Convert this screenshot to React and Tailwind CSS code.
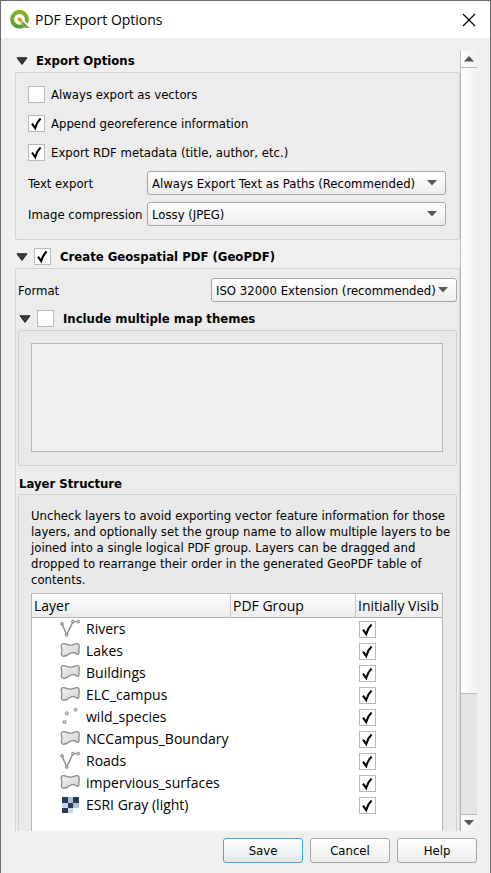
import { useState } from "react";

const layers = [
  { name: "Rivers", type: "line" },
  { name: "Lakes", type: "polygon" },
  { name: "Buildings", type: "polygon" },
  { name: "ELC_campus", type: "polygon" },
  { name: "wild_species", type: "point" },
  { name: "NCCampus_Boundary", type: "polygon" },
  { name: "Roads", type: "line" },
  { name: "impervious_surfaces", type: "polygon" },
  { name: "ESRI Gray (light)", type: "raster" },
];

function QgisLogo() {
  return (
    <svg width="20" height="20" viewBox="0 0 20 20" aria-hidden="true">
      <defs>
        <linearGradient id="ring" x1="0" y1="0" x2="0" y2="1">
          <stop offset="0" stopColor="#86b32a" />
          <stop offset="1" stopColor="#5b9a30" />
        </linearGradient>
      </defs>
      <circle cx="9.5" cy="9.3" r="7.4" fill="none" stroke="url(#ring)" strokeWidth="4" />
      <path d="M10 11.8V9.8h2.4l6.9 6.2v2.4h-2.8z" fill="#fff" stroke="#fff" strokeWidth="1.4" />
      <path d="M10.4 12.6l3-.8 6.1 6.2h-4.4z" fill="#73a53c" />
      <path d="M10.4 10.4h2.4l1.4 1.6-3.2 1.1z" fill="#e9d28b" />
      <path d="M7.8 7.8h3.2l1.4 3.2-2.2 1.4-2.4-2z" fill="#ee8a33" />
    </svg>
  );
}

function LayerIcon({ type }) {
  if (type === "line") {
    return (
      <svg width="20" height="20" viewBox="0 0 20 20" aria-hidden="true">
        <path d="M2 4.9L6.7 15.9L13 2.6H18" fill="none" stroke="#8c8c8c" strokeWidth="1.4" />
        <g fill="#d8d8d8" stroke="#858585">
          <circle cx="2" cy="4.9" r="1.4" />
          <circle cx="6.7" cy="15.9" r="1.4" />
          <circle cx="13" cy="2.6" r="1.4" />
          <circle cx="18.2" cy="2.6" r="1.4" />
        </g>
      </svg>
    );
  }
  if (type === "point") {
    return (
      <svg width="20" height="20" viewBox="0 0 20 20" aria-hidden="true">
        <g fill="#d8d8d8" stroke="#858585">
          <circle cx="4.5" cy="15" r="1.5" />
          <circle cx="6.8" cy="6.3" r="1.5" />
          <circle cx="15.6" cy="2.7" r="1.5" />
        </g>
      </svg>
    );
  }
  if (type === "raster") {
    return (
      <svg width="20" height="20" viewBox="0 -1 20 20" shapeRendering="crispEdges" aria-hidden="true">
        <path fill="#a9c2e2" d="M2 1h17v16H2z" />
        <path fill="#fff" d="M13 12h6v5h-6z" />
        <path fill="#c5d7ee" d="M2 7h6v5H2zM8 12h5v5H8z" />
        <path fill="#2c3b50" d="M2 1h6v6H2zM13 1h6v6h-6zM8 7h5v5H8zM2 12h6v5H2z" />
      </svg>
    );
  }
  return (
    <svg width="20" height="20" viewBox="0 -1 20 20" aria-hidden="true">
      <defs>
        <linearGradient id="area" x1="0" y1="0" x2="1" y2="1">
          <stop offset="0" stopColor="#f2f2f2" />
          <stop offset="1" stopColor="#cfcfcf" />
        </linearGradient>
      </defs>
      <path
        d="M1.2 3.6C1.5 1.4 3.5 1.3 5 1.8C8 3 11 3.9 14 2.4C16 1.5 19 1.1 19.2 3.6C19.4 6 18.6 8.5 18.9 10.5C19 12.4 18 12.6 16.4 11.8C13.5 9.8 11.8 10.2 9.5 11.8C7 13.6 4.5 14.8 2.6 14C.4 13 1.4 11 1.8 9.2C2.2 7 .9 5.4 1.2 3.6Z"
        fill="url(#area)"
        stroke="#8a8a8a"
        strokeWidth="1.3"
      />
    </svg>
  );
}

function Check({ id, label, initial = false }) {
  const [on, setOn] = useState(initial);
  return (
    <span className="grid size-[17px] shrink-0">
      <input
        id={id}
        type="checkbox"
        aria-label={label}
        checked={on}
        onChange={() => setOn(!on)}
        className="peer col-start-1 row-start-1 size-[17px] appearance-none border border-[#b9b9b9] bg-white"
      />
      <svg
        viewBox="0 0 17 17"
        className="pointer-events-none invisible col-start-1 row-start-1 size-[17px] peer-checked:visible"
        aria-hidden="true"
      >
        <path d="M4 8.6L7.2 13Q8.8 7.2 12.6 3.6" fill="none" stroke="#000" strokeWidth="2.1" />
      </svg>
    </span>
  );
}

function Triangle() {
  return (
    <svg width="12" height="8" viewBox="0 0 12 8" className="shrink-0" aria-hidden="true">
      <path d="M1 .8H11L6 7.4Z" fill="#3c3c3c" stroke="#1e1e1e" strokeLinejoin="round" />
    </svg>
  );
}

function Combo({ id, options, className }) {
  return (
    <span className={"grid " + className}>
      <select
        id={id}
        className="col-start-1 row-start-1 h-6 w-full min-w-0 appearance-none rounded-[3px] border border-[#a6a6a6] bg-linear-to-b from-white to-[#ededed] pt-px pr-5 pl-1"
      >
        {options.map((option) => (
          <option key={option}>{option}</option>
        ))}
      </select>
      <svg
        width="10"
        height="6"
        viewBox="0 0 10 6"
        className="pointer-events-none col-start-1 row-start-1 mr-[9px] self-center justify-self-end"
        aria-hidden="true"
      >
        <path d="M0 0H10L5 5.4Z" fill="#5a5a5a" />
      </svg>
    </span>
  );
}

function CheckRow({ id, label, initial }) {
  return (
    <div className="flex h-[17px] items-center gap-[6px]">
      <Check id={id} initial={initial} />
      <label htmlFor={id} className="pt-px">{label}</label>
    </div>
  );
}

function ScrollBar() {
  return (
    <div className="flex w-[17px] shrink-0 flex-col border-l border-[#b8b8b8] bg-[#e4e4e4]">
      <button type="button" aria-label="Scroll up" className="flex h-4 items-center justify-center bg-linear-to-r from-white to-[#efefef]">
        <svg width="10" height="6" viewBox="0 0 10 6" aria-hidden="true">
          <path d="M0 5.5L5 0L10 5.5Z" fill="#555" />
        </svg>
      </button>
      <div className="basis-[627px] border-y border-[#b8b8b8] bg-linear-to-r from-white to-[#efefef]" />
      <div className="flex-1" />
      <button type="button" aria-label="Scroll down" className="flex h-[17px] items-center justify-center border-t border-[#b8b8b8] bg-linear-to-r from-white to-[#efefef]">
        <svg width="10" height="6" viewBox="0 0 10 6" aria-hidden="true">
          <path d="M0 0H10L5 5.5Z" fill="#555" />
        </svg>
      </button>
    </div>
  );
}

const headCell = "overflow-hidden bg-linear-to-b from-white to-[#ebebeb] border-b border-[#b4b4b4] pl-[2px] text-left font-normal whitespace-nowrap";

export default function App() {
  return (
    <div className="flex h-screen flex-col border border-b-0 border-[#6b696c] bg-[#efefef] font-['DejaVu_Sans_Condensed','DejaVu_Sans',sans-serif] text-[13px] leading-4 text-black">
      <header className="flex h-[37px] shrink-0 items-center bg-white pr-[14px] pl-[9px]">
        <QgisLogo />
        <h1 className="ml-[5px] flex-1 font-['Open_Sans',sans-serif] text-[14px] leading-5">PDF Export Options</h1>
        <button type="button" aria-label="Close">
          <svg width="14" height="14" viewBox="0 0 14 14" aria-hidden="true">
            <path d="M1 1L13 13M13 1L1 13" stroke="#000" strokeWidth="1.2" />
          </svg>
        </button>
      </header>

      <main className="mt-[13px] mr-[13px] ml-[14px] flex min-h-0 flex-1">
        <div className="min-w-0 flex-1 overflow-hidden">
          <div className="flex h-[21px] items-center gap-2 pb-px pl-px">
            <Triangle />
            <h2 className="font-bold">Export Options</h2>
          </div>
          <section className="rounded-[2px] border border-[#d3d3d3] bg-[#ececec] py-[13px] pr-[13px] pl-3">
            <div className="flex flex-col gap-3">
              <CheckRow id="vectors" label="Always export as vectors" />
              <CheckRow id="georef" label="Append georeference information" initial />
              <CheckRow id="rdf" label="Export RDF metadata (title, author, etc.)" initial />
            </div>
            <div className="mt-[10px] flex items-center">
              <label htmlFor="text-export" className="w-[119px] pt-px whitespace-nowrap">Text export</label>
              <Combo
                id="text-export"
                className="flex-1"
                options={["Always Export Text as Paths (Recommended)", "Always Export Text as Text Objects"]}
              />
            </div>
            <div className="mt-[7px] flex items-center">
              <label htmlFor="compression" className="w-[119px] pt-px whitespace-nowrap">Image compression</label>
              <Combo id="compression" className="flex-1" options={["Lossy (JPEG)", "Lossless"]} />
            </div>
          </section>

          <div className="flex h-7 items-center pt-[5px] pl-px">
            <Triangle />
            <span className="mr-[9px] ml-[6px]">
              <Check id="geopdf" initial />
            </span>
            <label htmlFor="geopdf" className="pt-px font-bold">Create Geospatial PDF (GeoPDF)</label>
          </div>
          <section className="rounded-t-[2px] border border-b-0 border-[#d3d3d3] bg-[#ececec] pt-[9px] pr-[2px] pl-[2px]">
            <div className="flex items-center justify-between">
              <label htmlFor="format" className="pt-px">Format</label>
              <Combo
                id="format"
                className="w-[246px]"
                options={["ISO 32000 Extension (recommended)", "OGC Best Practice"]}
              />
            </div>
            <div className="flex h-7 items-center pt-[5px] pl-px">
              <Triangle />
              <span className="mr-[9px] ml-[6px]">
                <Check id="themes" />
              </span>
              <label htmlFor="themes" className="pt-px font-bold">Include multiple map themes</label>
            </div>
            <div className="rounded-[2px] border border-[#d3d3d3] bg-[#e9e9e9] pt-3 pr-[13px] pb-[13px] pl-3">
              <div className="h-[109px] border border-[#b4b4b4] bg-[#efefef]" />
            </div>
            <h2 className="flex h-7 items-center pt-2 pl-px font-bold">Layer Structure</h2>
            <div className="rounded-t-[2px] border border-b-0 border-[#d3d3d3] bg-[#e9e9e9] pt-[13px] pr-[13px] pl-3">
              <p className="-mr-3 mb-[5px]">
                Uncheck layers to avoid exporting vector feature information for those layers, and optionally set the
                group name to allow multiple layers to be joined into a single logical PDF group. Layers can be dragged
                and dropped to rearrange their order in the generated GeoPDF table of contents.
              </p>
              <div className="h-[260px] overflow-hidden border border-[#b4b4b4] bg-white">
                <table className="w-full table-fixed border-separate border-spacing-0 font-['Open_Sans',sans-serif] text-[14px] leading-5">
                  <thead>
                    <tr className="h-6">
                      <th className={headCell}>Layer</th>
                      <th className={headCell + " w-[125px] border-l border-l-[#c8c8c8]"}>PDF Group</th>
                      <th className={headCell + " w-[87px] border-l border-l-[#c8c8c8]"}>Initially Visib</th>
                    </tr>
                  </thead>
                  <tbody>
                    {layers.map((layer) => (
                      <tr key={layer.name} className="h-[22px]">
                        <td className="p-0 pl-7">
                          <div className="flex items-center gap-[6px] whitespace-nowrap">
                            <LayerIcon type={layer.type} />
                            {layer.name}
                          </div>
                        </td>
                        <td className="p-0" />
                        <td className="p-0 pl-1">
                          <Check label={layer.name + " initially visible"} initial />
                        </td>
                      </tr>
                    ))}
                  </tbody>
                </table>
              </div>
            </div>
          </section>
        </div>
        <ScrollBar />
      </main>

      <footer className="mt-[7px] mr-[13px] mb-[10px] flex shrink-0 justify-end gap-[7px]">
        <button type="button" className="h-[25px] w-20 rounded-[3px] border border-[#3fa5f5] bg-linear-to-b from-white to-[#e3e8ee]">Save</button>
        <button type="button" className="h-[25px] w-20 rounded-[3px] border border-[#a6a6a6] bg-linear-to-b from-white to-[#ededed]">Cancel</button>
        <button type="button" className="h-[25px] w-20 rounded-[3px] border border-[#a6a6a6] bg-linear-to-b from-white to-[#ededed]">Help</button>
      </footer>
    </div>
  );
}
